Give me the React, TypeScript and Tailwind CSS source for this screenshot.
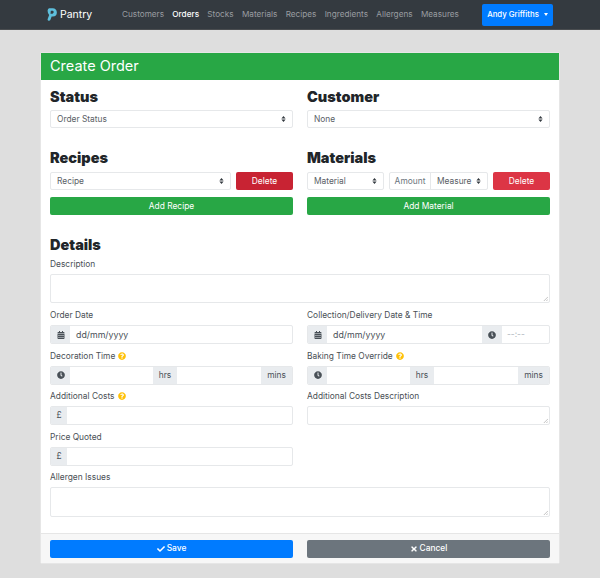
import { FaCalendarAlt, FaCheck, FaClock, FaQuestionCircle, FaTimes } from 'react-icons/fa';
import type { ReactNode } from 'react';

const navItems = ['Customers', 'Orders', 'Stocks', 'Materials', 'Recipes', 'Ingredients', 'Allergens', 'Measures'];

function Arrows() {
  return (
    <svg viewBox="0 0 8 10" className="absolute right-[6px] top-1/2 h-[6px] w-[5px] -translate-y-1/2">
      <path d="M4 0L7.5 4H.5zM4 10L.5 6h7z" fill="#343a40" />
    </svg>
  );
}

function Select({ label, className = '' }: { label: string; className?: string }) {
  return (
    <div className={`relative flex h-[18px] items-center rounded-[2px] border border-[#e6e8ea] bg-white pl-[6px] text-[#5a6066] ${className}`}>
      {label}
      <Arrows />
    </div>
  );
}

function Addon({ children, className = '' }: { children: ReactNode; className?: string }) {
  return (
    <div className={`flex h-full shrink-0 items-center justify-center bg-[#e9ecef] text-[#495057] ${className}`}>
      {children}
    </div>
  );
}

function Group({ children }: { children: ReactNode }) {
  return (
    <div className="flex h-[19px] items-center overflow-hidden rounded-[2px] border border-[#e6e8ea] bg-white">
      {children}
    </div>
  );
}

function Label({ text, help }: { text: string; help?: boolean }) {
  return (
    <div className="mb-[5px] flex h-[10px] items-center gap-[3px] leading-[10px] text-[#4a5056]">
      {text}
      {help && <FaQuestionCircle className="h-[8px] w-[8px] text-[#ffc107]" />}
    </div>
  );
}

function Textarea({ className = '' }: { className?: string }) {
  return (
    <div className={`relative rounded-[2px] border border-[#e6e8ea] bg-white ${className}`}>
      <svg viewBox="0 0 6 6" className="absolute bottom-[1px] right-[1px] h-[5px] w-[5px]">
        <path d="M1 6L6 1M4 6L6 4" stroke="#9a9a9a" strokeWidth=".7" />
      </svg>
    </div>
  );
}

function Heading({ children }: { children: ReactNode }) {
  return <h2 className="text-[14.5px] font-black leading-[16px] text-[#212529]">{children}</h2>;
}

function Duration() {
  return (
    <Group>
      <Addon className="w-[19px]">
        <FaClock className="h-[8px] w-[8px]" />
      </Addon>
      <div className="flex-1" />
      <Addon className="w-[24px]">hrs</Addon>
      <div className="flex-1 border-l border-[#e6e8ea]" />
      <Addon className="w-[31px]">mins</Addon>
    </Group>
  );
}

export default function App() {
  return (
    <div className="h-[578px] overflow-hidden bg-[#dedede] text-[8.4px] font-['Inter',sans-serif]">
      <nav className="flex h-[30px] items-center border-b border-[#4a4d50] bg-[#343a40] pl-[47px] pr-[47px]">
        <div className="flex w-[75px] items-center gap-[3px] text-[10.5px] text-white">
          <svg viewBox="0 0 12 16" className="h-[15px] w-[10px]">
            <path
              fillRule="evenodd"
              d="M2.5.5H7a4.8 4.8 0 0 1 4.8 5A5 5 0 0 1 7 10.5H5.6L4 14.6q-.8 1.2-2.2.8-1.4-.6-1-2L2.6 8.6Q.4 6 .8 3 1 1 2.5.5zM4.6 3.6 4.2 7h2.4A1.8 1.8 0 0 0 7 3.6z"
              fill="#5ebfdc"
            />
          </svg>
          Pantry
        </div>
        <div className="flex gap-[8.3px] text-[8.2px]">
          {navItems.map((item) => (
            <span key={item} className={item === 'Orders' ? 'font-medium text-white' : 'text-[#9a9da0]'}>
              {item}
            </span>
          ))}
        </div>
        <button className="ml-auto flex h-[22px] w-[71px] items-center justify-center gap-[5px] rounded-[2px] bg-[#007bff] text-[7.8px] font-medium text-white">
          Andy Griffiths
          <span className="border-x-[2.5px] border-t-[3px] border-x-transparent border-t-white" />
        </button>
      </nav>

      <main className="mx-[40px] mt-[22px] rounded-[2px] border border-[#e6e6e6] bg-white">
        <header className="flex h-[27px] items-center bg-[#28a745] pb-[1px] pl-[9px] text-[14.5px] text-white">
          Create Order
        </header>

        <div className="h-[453px] px-[9px] pt-[9px]">
          <div className="grid grid-cols-2 gap-x-[14px]">
            <section>
              <Heading>Status</Heading>
              <Select label="Order Status" className="mt-[5px]" />
            </section>
            <section>
              <Heading>Customer</Heading>
              <Select label="None" className="mt-[5px]" />
            </section>
          </div>

          <div className="mt-[22px] grid grid-cols-2 gap-x-[14px]">
            <section>
              <Heading>Recipes</Heading>
              <div className="mt-[6px] flex gap-[5px]">
                <Select label="Recipe" className="flex-1" />
                <button className="h-[18px] w-[57px] rounded-[2px] bg-[#c82333] text-white">Delete</button>
              </div>
              <button className="mt-[7px] block h-[18px] w-full rounded-[2px] bg-[#28a745] text-white">Add Recipe</button>
            </section>
            <section>
              <Heading>Materials</Heading>
              <div className="mt-[6px] flex gap-[5px]">
                <Select label="Material" className="w-[77px]" />
                <div className="flex h-[18px] w-[99px] items-center rounded-[2px] border border-[#e6e8ea] text-[#6c757d]">
                  <span className="w-[41px] border-r border-[#e6e8ea] text-center leading-[16px]">Amount</span>
                  <div className="relative flex-1 pl-[6px] text-[#5a6066]">
                    Measure
                    <Arrows />
                  </div>
                </div>
                <button className="h-[18px] w-[57px] rounded-[2px] bg-[#dc3545] text-white">Delete</button>
              </div>
              <button className="mt-[7px] block h-[18px] w-full rounded-[2px] bg-[#28a745] text-white">Add Material</button>
            </section>
          </div>

          <div className="mt-[22px]">
            <Heading>Details</Heading>
            <div className="mt-[6px]">
              <Label text="Description" />
              <Textarea className="h-[29px]" />
            </div>
          </div>

          <div className="mt-[7px] grid grid-cols-2 gap-x-[14px] gap-y-[6.6px]">
            <div>
              <Label text="Order Date" />
              <Group>
                <Addon className="w-[19px]">
                  <FaCalendarAlt className="h-[8px] w-[8px]" />
                </Addon>
                <span className="pl-[6px] text-[8.8px] text-[#495057]">dd/mm/yyyy</span>
              </Group>
            </div>
            <div>
              <Label text="Collection/Delivery Date & Time" />
              <Group>
                <Addon className="w-[19px]">
                  <FaCalendarAlt className="h-[8px] w-[8px]" />
                </Addon>
                <span className="flex-1 pl-[6px] text-[8.8px] text-[#495057]">dd/mm/yyyy</span>
                <Addon className="w-[20px]">
                  <FaClock className="h-[8px] w-[8px]" />
                </Addon>
                <span className="w-[47px] pl-[5px] text-[#adb5bd]">--:--</span>
              </Group>
            </div>
            <div>
              <Label text="Decoration Time" help />
              <Duration />
            </div>
            <div>
              <Label text="Baking Time Override" help />
              <Duration />
            </div>
            <div>
              <Label text="Additional Costs" help />
              <Group>
                <Addon className="w-[16px]">£</Addon>
              </Group>
            </div>
            <div>
              <Label text="Additional Costs Description" />
              <Textarea className="h-[19px]" />
            </div>
            <div>
              <Label text="Price Quoted" />
              <Group>
                <Addon className="w-[16px]">£</Addon>
              </Group>
            </div>
          </div>

          <div className="mt-[6px]">
            <Label text="Allergen Issues" />
            <Textarea className="h-[30px]" />
          </div>
        </div>

        <footer className="grid h-[30px] grid-cols-2 items-center gap-x-[14px] border-t border-[#e6e6e6] bg-[#f7f7f7] px-[9px]">
          <button className="flex h-[18px] items-center justify-center gap-[2px] rounded-[2px] bg-[#007bff] font-medium text-white">
            <FaCheck className="h-[8px] w-[8px]" />
            Save
          </button>
          <button className="flex h-[18px] items-center justify-center gap-[2px] rounded-[2px] bg-[#6c757d] font-medium text-white">
            <FaTimes className="h-[8px] w-[8px]" />
            Cancel
          </button>
        </footer>
      </main>
    </div>
  );
}
